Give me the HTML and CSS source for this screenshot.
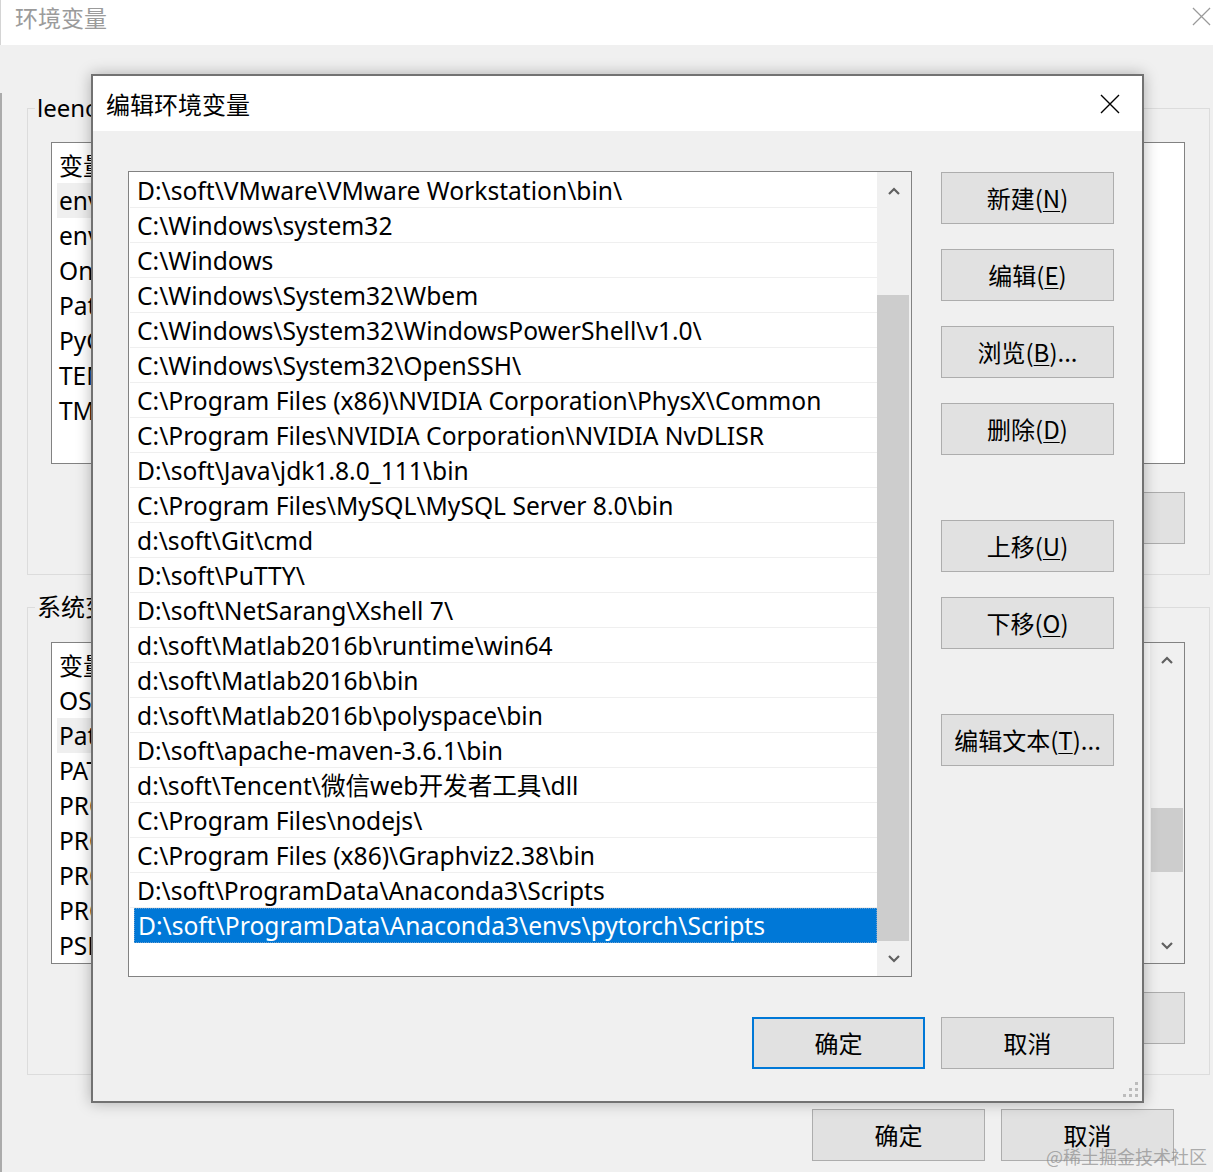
FILE: index.html
```html
<!DOCTYPE html>
<html lang="zh-CN">
<head>
<meta charset="utf-8">
<title>环境变量</title>
<link rel="stylesheet" href="styles.css">
</head>
<body>
<div class="bgwin">
  <div class="bg-titlebar">
    <span class="bg-title">环境变量</span>
    <svg class="bg-close" viewBox="0 0 20 20"><path d="M1 1 L19 19 M19 1 L1 19"/></svg>
  </div>
  <div class="bg-body">
    <fieldset class="group g1">
      <legend>leeno 的用户变量(U)</legend>
      <div class="blist">
        <div class="brows">
          <div class="brow head">变量</div>
          <div class="brow hl">env_path</div>
          <div class="brow">env_home</div>
          <div class="brow">OneDrive</div>
          <div class="brow">Path</div>
          <div class="brow">PyCharm</div>
          <div class="brow">TEMP</div>
          <div class="brow">TMP</div>
        </div>
      </div>
      <div class="bbtns">
        <button class="btn">新建(N)...</button>
        <button class="btn">编辑(E)...</button>
        <button class="btn">删除(D)</button>
      </div>
    </fieldset>
    <fieldset class="group g2">
      <legend>系统变量(S)</legend>
      <div class="blist">
        <div class="brows">
          <div class="brow head">变量</div>
          <div class="brow">OS</div>
          <div class="brow hl">Path</div>
          <div class="brow">PATHEXT</div>
          <div class="brow">PROCESSOR_ARCHITECTURE</div>
          <div class="brow">PROCESSOR_IDENTIFIER</div>
          <div class="brow">PROCESSOR_LEVEL</div>
          <div class="brow">PROCESSOR_REVISION</div>
          <div class="brow">PSModulePath</div>
        </div>
        <div class="bscroll">
          <div class="sb-btn up"><svg viewBox="0 0 12 8"><polyline points="1,7 6,2 11,7"/></svg></div>
          <div class="sb-track"><div class="b-thumb"></div></div>
          <div class="sb-btn down"><svg viewBox="0 0 12 8"><polyline points="1,1 6,6 11,1"/></svg></div>
        </div>
      </div>
      <div class="bbtns">
        <button class="btn">新建(W)...</button>
        <button class="btn">编辑(I)...</button>
        <button class="btn">删除(L)</button>
      </div>
    </fieldset>
    <div class="bg-footer">
      <button class="btn">确定</button>
      <button class="btn">取消</button>
    </div>
  </div>

  <div class="dialog">
    <div class="dlg-titlebar">
      <span class="dlg-title">编辑环境变量</span>
      <svg class="dlg-close" viewBox="0 0 20 20"><path d="M1 1 L19 19 M19 1 L1 19"/></svg>
    </div>
    <div class="dlg-body">
      <div class="dlg-main">
        <div class="plist">
          <div class="prows">
            <div class="prow">D:\soft\VMware\VMware Workstation\bin\</div>
            <div class="prow">C:\Windows\system32</div>
            <div class="prow">C:\Windows</div>
            <div class="prow">C:\Windows\System32\Wbem</div>
            <div class="prow">C:\Windows\System32\WindowsPowerShell\v1.0\</div>
            <div class="prow">C:\Windows\System32\OpenSSH\</div>
            <div class="prow">C:\Program Files (x86)\NVIDIA Corporation\PhysX\Common</div>
            <div class="prow">C:\Program Files\NVIDIA Corporation\NVIDIA NvDLISR</div>
            <div class="prow">D:\soft\Java\jdk1.8.0_111\bin</div>
            <div class="prow">C:\Program Files\MySQL\MySQL Server 8.0\bin</div>
            <div class="prow">d:\soft\Git\cmd</div>
            <div class="prow">D:\soft\PuTTY\</div>
            <div class="prow">D:\soft\NetSarang\Xshell 7\</div>
            <div class="prow">d:\soft\Matlab2016b\runtime\win64</div>
            <div class="prow">d:\soft\Matlab2016b\bin</div>
            <div class="prow">d:\soft\Matlab2016b\polyspace\bin</div>
            <div class="prow">D:\soft\apache-maven-3.6.1\bin</div>
            <div class="prow">d:\soft\Tencent\微信web开发者工具\dll</div>
            <div class="prow">C:\Program Files\nodejs\</div>
            <div class="prow">C:\Program Files (x86)\Graphviz2.38\bin</div>
            <div class="prow">D:\soft\ProgramData\Anaconda3\Scripts</div>
            <div class="prow sel">D:\soft\ProgramData\Anaconda3\envs\pytorch\Scripts</div>
          </div>
          <div class="pscroll">
            <div class="sb-btn up tall"><svg viewBox="0 0 12 8"><polyline points="1,7 6,2 11,7"/></svg></div>
            <div class="sb-track"><div class="p-thumb"></div></div>
            <div class="sb-btn down"><svg viewBox="0 0 12 8"><polyline points="1,1 6,6 11,1"/></svg></div>
          </div>
        </div>
        <div class="dlg-btns">
          <button class="btn">新建(<u>N</u>)</button>
          <button class="btn">编辑(<u>E</u>)</button>
          <button class="btn">浏览(<u>B</u>)...</button>
          <button class="btn">删除(<u>D</u>)</button>
          <button class="btn sep">上移(<u>U</u>)</button>
          <button class="btn">下移(<u>O</u>)</button>
          <button class="btn sep">编辑文本(<u>T</u>)...</button>
        </div>
      </div>
      <div class="dlg-footer">
        <button class="btn default">确定</button>
        <button class="btn">取消</button>
      </div>
    </div>
    <svg class="grip" viewBox="0 0 17 17">
      <rect x="13" y="1" width="3" height="3"/>
      <rect x="7" y="7" width="3" height="3"/>
      <rect x="13" y="7" width="3" height="3"/>
      <rect x="1" y="13" width="3" height="3"/>
      <rect x="7" y="13" width="3" height="3"/>
      <rect x="13" y="13" width="3" height="3"/>
    </svg>
  </div>

  <div class="watermark">@稀土掘金技术社区</div>
</div>
</body>
</html>
```

FILE: styles.css
```css
* { box-sizing: border-box; }
html, body { margin: 0; padding: 0; }
body { background: #f0f0f0; }

.bgwin {
  position: relative;
  width: 1213px;
  height: 1172px;
  overflow: hidden;
  background: #f0f0f0;
  font-family: "Noto Sans", "Noto Sans CJK SC", sans-serif;
  color: #000;
}

/* background window */
.bg-titlebar {
  height: 45px;
  background: #fff;
  border-left: 1px solid #d4d4d4;
  display: flex;
  justify-content: space-between;
  align-items: flex-start;
  padding: 0 2px 0 14px;
}
.bg-title {
  font-family: "Noto Sans CJK SC", sans-serif;
  font-size: 23px;
  line-height: 34px;
  color: #9b9b9b;
}
.bg-close {
  width: 19px;
  height: 19px;
  margin-top: 7px;
  fill: none;
  stroke: #9a9a9a;
  stroke-width: 1.3;
}

.bg-body {
  height: 1127px;
  border-left: 2px solid #ababab;
  padding: 0 3px 0 25px;
}

.group {
  margin: 0;
  padding: 0;
  border: 1px solid #dcdcdc;
  min-inline-size: 0;
}
.group legend {
  font-family: "Noto Sans", "Noto Sans CJK SC", sans-serif;
  font-size: 24px;
  line-height: 30px;
  padding: 0 2px;
  margin-left: 7px;
}
.g1 { margin-top: 48px; padding-bottom: 30px; }
.g2 { margin-top: 17px; padding-bottom: 30px; }
.g1 .blist { margin-top: 19px; }
.g2 .blist { margin-top: 20px; }

.blist {
  height: 322px;
  margin-left: 23px;
  margin-right: 24px;
  background: #fff;
  border: 1px solid #828282;
  display: flex;
}
.brows {
  flex: 1;
  padding: 4px 0 0 5px;
}
.brow {
  width: 420px;
  height: 35px;
  line-height: 35px;
  padding-left: 2px;
  font-size: 24.5px;
  white-space: nowrap;
}
.brow.head { height: 36px; line-height: 36px; font-family: "Noto Sans CJK SC", sans-serif; font-size: 24px; }
.brow.hl { background: #efefef; }

.bscroll {
  width: 34px;
  background: #f0f0f0;
  display: flex;
  flex-direction: column;
}
.sb-btn {
  height: 34px;
  display: flex;
  align-items: center;
  justify-content: center;
}
.sb-btn.tall { height: 38px; }
.sb-btn svg {
  width: 12px;
  height: 8px;
  fill: none;
  stroke: #606060;
  stroke-width: 2.2;
}
.sb-track { flex: 1; }
.b-thumb {
  margin-top: 131px;
  width: 32px;
  margin-left: 1px;
  height: 64px;
  background: #cdcdcd;
}

.bbtns {
  margin-top: 28px;
  margin-right: 24px;
  display: flex;
  justify-content: flex-end;
  gap: 16px;
}

.btn {
  width: 173px;
  height: 52px;
  background: #e1e1e1;
  border: 1px solid #adadad;
  border-radius: 0;
  padding: 0;
  margin: 0;
  font-family: "Noto Sans CJK SC", sans-serif;
  font-size: 24px;
  line-height: 30px;
  color: #000;
  white-space: nowrap;
}
.btn u {
  text-decoration-thickness: 1px;
  text-underline-offset: 3px;
}
.btn.default { border: 2px solid #0078d7; }

.bg-footer {
  margin-top: 34px;
  margin-right: 36px;
  display: flex;
  justify-content: flex-end;
  gap: 16px;
}

/* dialog */
.dialog {
  position: absolute;
  left: 91px;
  top: 74px;
  width: 1053px;
  height: 1029px;
  border: 2px solid #727272;
  background: #f0f0f0;
  box-shadow: 0 0 14px rgba(0, 0, 0, 0.28);
  display: flex;
  flex-direction: column;
}
.dlg-titlebar {
  height: 55px;
  background: #fff;
  display: flex;
  justify-content: space-between;
  align-items: center;
  padding: 0 22px 0 13px;
}
.dlg-title {
  font-family: "Noto Sans CJK SC", sans-serif;
  font-size: 24px;
  line-height: 30px;
}
.dlg-close {
  width: 20px;
  height: 20px;
  fill: none;
  stroke: #000;
  stroke-width: 1.4;
}
.dlg-body {
  flex: 1;
  padding: 40px 28px 0 35px;
}
.dlg-main {
  display: grid;
  grid-template-columns: 784px 173px;
  column-gap: 29px;
}
.plist {
  height: 806px;
  background: #fff;
  border: 1px solid #828282;
  display: flex;
}
.prows {
  flex: 1;
  min-width: 0;
  padding: 1px 0 0 1px;
}
.prow {
  height: 35px;
  line-height: 36px;
  padding-left: 7px;
  border-bottom: 1px solid #efefef;
  font-size: 24.6px;
  white-space: nowrap;
  overflow: hidden;
}
.prow.sel {
  margin-left: 4px;
  padding-left: 3px;
  background: #0078d7;
  color: #fff;
  border: 1px dotted #6a9fd0;
  line-height: 34px;
}
.pscroll {
  width: 34px;
  background: #f0f0f0;
  display: flex;
  flex-direction: column;
}
.p-thumb {
  margin-top: 85px;
  width: 32px;
  height: 646px;
  background: #cdcdcd;
}
.dlg-btns {
  padding-top: 1px;
  display: flex;
  flex-direction: column;
  gap: 25px;
}
.dlg-btns .sep { margin-top: 40px; }
.dlg-footer {
  margin-top: 40px;
  display: flex;
  justify-content: flex-end;
  gap: 16px;
}
.grip {
  position: absolute;
  right: 3px;
  bottom: 3px;
  width: 17px;
  height: 17px;
  fill: #bcbcbc;
}

.watermark {
  position: absolute;
  left: 1046px;
  top: 1143px;
  font-family: "Noto Sans CJK SC", sans-serif;
  font-size: 18px;
  line-height: 26px;
  color: rgba(140, 140, 140, 0.7);
  white-space: nowrap;
}
```
